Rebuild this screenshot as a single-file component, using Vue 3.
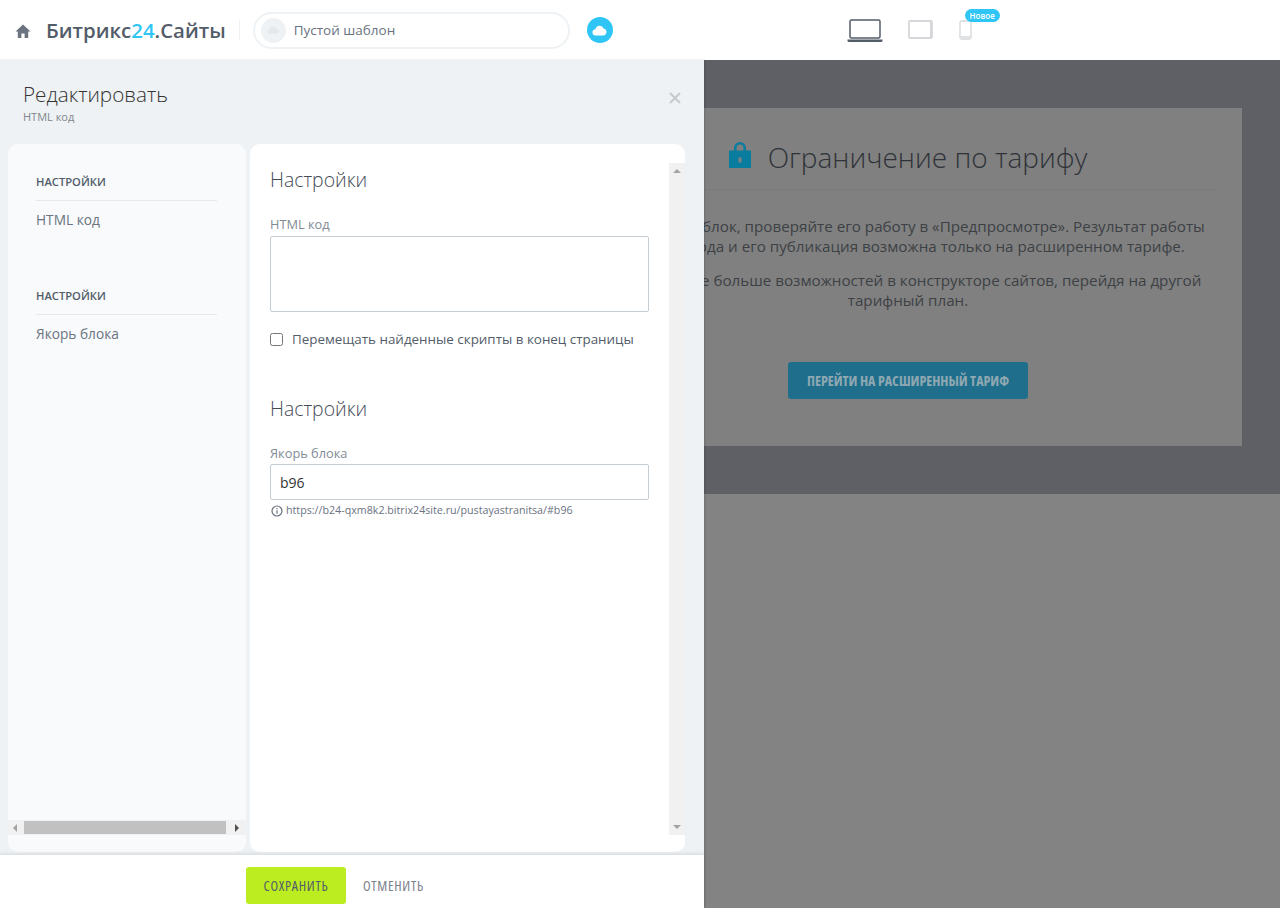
<template>
  <div class="page">
    <header class="topbar">
      <svg class="home" viewBox="0 0 16 14" width="16" height="14"><path d="M8 .5 .5 7.400h2.300V14h3.600V9.400h3.200V14h3.600V7.400h2.300z" fill="#6a737f" /></svg>
      <div class="logo">Битрикс<span class="logo-num">24</span>.Сайты</div>
      <div class="logo-sep"></div>
      <div class="tpl">
        <span class="tpl-pic">
          <svg viewBox="0 0 20 14" width="20" height="14"><path d="M5 12a3 3 0 0 1 0-6 5 5 0 0 1 9.500-1A3.500 3.500 0 0 1 15 12z" fill="#e3e8eb" /></svg>
        </span>
        <span class="tpl-name">Пустой шаблон</span>
      </div>
      <span class="cloud">
        <svg viewBox="0 0 16 12" width="15" height="11"><path d="M4 11.500a3.500 3.500 0 0 1-.4-7 4.700 4.700 0 0 1 8.900-.7A3.900 3.900 0 0 1 12 11.500z" fill="#fff" /></svg>
      </span>
      <div class="devices">
        <svg class="laptop" viewBox="0 0 36 24" width="36" height="24"><rect x="3" y="1" width="30" height="18" rx="1.500" fill="none" stroke="#535c69" stroke-width="1.500" /><path d="M.5 20.500h35v1a1.500 1.500 0 0 1-1.500 1.500H2a1.500 1.500 0 0 1-1.500-1.500z" fill="#535c69" /></svg>
        <svg class="tablet" viewBox="0 0 26 20" width="26" height="20"><rect x="1" y="1" width="23" height="17" rx="1" fill="none" stroke="#d5d7da" stroke-width="1.800" /><path d="M22 1h2v17h-2z" fill="#d5d7da" /></svg>
        <div class="phone-wrap">
          <svg viewBox="0 0 14 20" width="14" height="20"><rect x="1" y="1" width="11" height="18" rx="1.500" fill="none" stroke="#d5d7da" stroke-width="1.300" /><path d="M1 16h11v3H1z" fill="#dfe1e3" /></svg>
          <span class="badge">Новое</span>
        </div>
      </div>
    </header>

    <div class="stage">
      <section class="preview">
        <div class="notice">
          <h2 class="notice-title">
            <svg viewBox="0 0 22 28" width="22" height="28"><path d="M5 12V8a6 6 0 0 1 12 0v4h-2.600V8a3.400 3.400 0 0 0-6.800 0v4z" fill="#0a7d9f" /><path d="M0 10.500h22V28H0z" fill="#0a7d9f" /><path d="M9.500 17.500h3v5h-3z" fill="#808080" /></svg>
            Ограничение по тарифу
          </h2>
          <div class="notice-line"></div>
          <p class="notice-text">Создав этот блок, проверяйте его работу в «Предпросмотре». Результат работы<br>вашего кода и его публикация возможна только на расширенном тарифе.</p>
          <p class="notice-text">Вы получите больше возможностей в конструкторе сайтов, перейдя на другой<br>тарифный план.</p>
          <a class="notice-btn">ПЕРЕЙТИ НА РАСШИРЕННЫЙ ТАРИФ</a>
        </div>
      </section>

      <aside class="panel">
        <div class="panel-head">
          <div>
            <div class="panel-title">Редактировать</div>
            <div class="panel-sub">HTML код</div>
          </div>
          <svg class="close" viewBox="0 0 12 12" width="12" height="12"><path d="M1 1l10 10M11 1 1 11" stroke="#c6cacd" stroke-width="2" fill="none" /></svg>
        </div>

        <div class="columns">
          <nav class="nav-card">
            <div class="nav-body">
              <div v-for="g in navGroups" :key="g.item" class="nav-group">
                <div class="nav-head">НАСТРОЙКИ</div>
                <div class="nav-item">{{ g.item }}</div>
              </div>
            </div>
            <div class="hbar">
              <span class="arrow-left"></span>
              <span class="hthumb"></span>
              <span class="arrow-right"></span>
            </div>
          </nav>

          <main class="form-card">
            <div class="form-body">
              <h3 class="form-title">Настройки</h3>
              <label class="field-label">HTML код</label>
              <div class="textarea"></div>
              <label class="check-row">
                <input type="checkbox" class="check" />
                <span>Перемещать найденные скрипты в конец страницы</span>
              </label>

              <h3 class="form-title second">Настройки</h3>
              <label class="field-label">Якорь блока</label>
              <input class="text-input" type="text" value="b96" />
              <div class="hint">
                <svg viewBox="0 0 12 12" width="12" height="12"><circle cx="6" cy="6" r="5" fill="none" stroke="#6a737f" stroke-width="1.200" /><path d="M5.400 5.200h1.200v3.600H5.400zM5.400 3h1.200v1.200H5.400z" fill="#6a737f" /></svg>
                <span>https://b24-qxm8k2.bitrix24site.ru/pustayastranitsa/#b96</span>
              </div>
            </div>
            <div class="vbar">
              <span class="arrow-up"></span>
              <span class="arrow-down"></span>
            </div>
          </main>
        </div>

        <footer class="panel-foot">
          <button class="btn-save">СОХРАНИТЬ</button>
          <button class="btn-cancel">ОТМЕНИТЬ</button>
        </footer>
      </aside>
    </div>
  </div>
</template>

<script setup>
const navGroups = [
  { item: 'HTML код' },
  { item: 'Якорь блока' }
]
</script>

<style>
html, body {
  margin: 0;
  background: #808080;
}
</style>

<style scoped>
.page {
  width: 1280px;
  height: 908px;
  overflow: hidden;
  display: flex;
  flex-direction: column;
  font-family: "Open Sans", "Noto Sans", sans-serif;
}

.topbar {
  height: 60px;
  flex: none;
  background: #fff;
  display: flex;
  align-items: center;
  padding-left: 15px;
  box-sizing: border-box;
}

.home {
  margin-top: 1px;
}

.logo {
  margin-left: 15px;
  font-size: 20.400px;
  font-weight: 600;
  color: #535c69;
  white-space: nowrap;
}

.logo-num {
  color: #2fc6f6;
}

.logo-sep {
  width: 1px;
  height: 20px;
  margin-left: 13px;
  background: #eef2f4;
}

.tpl {
  width: 317px;
  height: 37px;
  box-sizing: border-box;
  margin-left: 13px;
  border: 2px solid #eef2f4;
  border-radius: 19px;
  display: flex;
  align-items: center;
  padding-left: 6px;
}

.tpl-pic {
  width: 25px;
  height: 25px;
  border-radius: 50%;
  background: #eef2f4;
  display: flex;
  align-items: center;
  justify-content: center;
}

.tpl-pic svg {
  width: 14px;
}

.tpl-name {
  margin-left: 8px;
  font-size: 13.500px;
  color: #6a737f;
}

.cloud {
  width: 26px;
  height: 26px;
  margin-left: 17px;
  border-radius: 50%;
  background: #2fc6f6;
  display: flex;
  align-items: center;
  justify-content: center;
}

.devices {
  margin-left: 234px;
  display: flex;
  align-items: center;
}

.laptop {
  margin-top: 1px;
}

.tablet {
  margin-left: 25px;
}

.phone-wrap {
  position: relative;
  margin-left: 25px;
  height: 20px;
}

.badge {
  position: absolute;
  left: 6px;
  top: -11px;
  width: 35px;
  height: 13px;
  border-radius: 7px;
  background: #2fc6f6;
  color: #fff;
  font-size: 8px;
  font-weight: 600;
  line-height: 13px;
  text-align: center;
}

.stage {
  flex: 1;
  position: relative;
  background: #838383;
}

.preview {
  height: 434px;
  box-sizing: border-box;
  padding: 48px 38px 48px 574px;
  background: #5e6065;
}

.notice {
  height: 338px;
  box-sizing: border-box;
  background: #808080;
  padding-top: 30px;
  text-align: center;
  white-space: nowrap;
}

.notice-title {
  margin: 0;
  display: flex;
  align-items: center;
  justify-content: center;
  gap: 17px;
  font-size: 28px;
  font-weight: 300;
  line-height: 38px;
  color: #2f3338;
}

.notice-title svg {
  margin-top: -7px;
}

.notice-line {
  height: 1px;
  margin: 13px 28px 26px;
  background: #7a7a7a;
}

.notice-text {
  margin: 0 0 14px;
  font-size: 15.200px;
  line-height: 20px;
  color: #3d4045;
}

.notice-btn {
  display: block;
  width: 240px;
  height: 37px;
  margin: 52px auto 0;
  border-radius: 3px;
  background: #1f6f8c;
  color: #8fa8b2;
  font-size: 14px;
  font-weight: 700;
  font-stretch: 85%;
  line-height: 37px;
}

.panel {
  position: absolute;
  left: 0;
  top: 0;
  bottom: 0;
  width: 704px;
  background: #eef2f4;
  display: flex;
  flex-direction: column;
  box-shadow: 1px 0 2px rgba(0, 0, 0, 0.15);
}

.panel-head {
  height: 84px;
  flex: none;
  box-sizing: border-box;
  padding: 18px 23px 0 23px;
  display: flex;
  justify-content: space-between;
}

.panel-title {
  font-size: 20.700px;
  font-weight: 300;
  line-height: 32px;
  color: #333;
}

.panel-sub {
  font-size: 11px;
  line-height: 14px;
  color: #80868e;
}

.close {
  margin-top: 14px;
}

.columns {
  flex: 1;
  min-height: 0;
  display: flex;
  gap: 4px;
  padding: 0 19px 2px 8px;
}

.nav-card {
  width: 238px;
  background: #f8fafc;
  border-radius: 10px;
  display: flex;
  flex-direction: column;
  padding-bottom: 17px;
}

.nav-body {
  flex: 1;
  padding: 29px 29px 0 28px;
}

.nav-group {
  height: 114px;
}

.nav-head {
  height: 27px;
  border-bottom: 1px solid #e6e9ec;
  font-size: 11.200px;
  font-weight: 600;
  line-height: 18px;
  color: #525c69;
}

.nav-item {
  margin-top: 9px;
  font-size: 13.700px;
  line-height: 20px;
  color: #6a737f;
}

.hbar {
  height: 15px;
  background: #f1f1f1;
  display: flex;
  align-items: center;
}

.hthumb {
  width: 202px;
  height: 13px;
  margin: 0 9px 0 7px;
  background: #c1c1c1;
}

.arrow-left,
.arrow-right {
  width: 0;
  height: 0;
  border-top: 4px solid transparent;
  border-bottom: 4px solid transparent;
}

.arrow-left {
  margin-left: 5px;
  border-right: 4px solid #a3a3a3;
}

.arrow-right {
  border-left: 4px solid #505050;
}

.form-card {
  flex: 1;
  min-width: 0;
  background: #fff;
  border-radius: 10px;
  display: flex;
  padding: 19px 0 17px;
}

.form-body {
  flex: 1;
  min-width: 0;
  margin-top: -1px;
  padding: 0 20px 0 20px;
}

.vbar {
  width: 16px;
  flex: none;
  background: #f1f1f1;
  display: flex;
  flex-direction: column;
  justify-content: space-between;
  align-items: center;
  padding: 6px 0;
  box-sizing: border-box;
}

.arrow-up,
.arrow-down {
  width: 0;
  height: 0;
  border-left: 4px solid transparent;
  border-right: 4px solid transparent;
}

.arrow-up {
  border-bottom: 4px solid #a3a3a3;
}

.arrow-down {
  border-top: 4px solid #a3a3a3;
}

.form-title {
  margin: 0;
  font-size: 19.400px;
  font-weight: 300;
  line-height: 36px;
  color: #444b55;
}

.form-title.second {
  margin-top: 42px;
}

.field-label {
  display: block;
  margin-top: 17px;
  font-size: 12.800px;
  line-height: 18px;
  color: #828b95;
}

.textarea {
  height: 76px;
  margin-top: 3px;
  box-sizing: border-box;
  border: 1px solid #c6cdd3;
  border-radius: 2px;
}

.check-row {
  display: flex;
  align-items: center;
  margin-top: 17px;
  font-size: 13.400px;
  line-height: 20px;
  color: #535c69;
}

.check {
  width: 13px;
  height: 13px;
  margin: 0 9px 0 0;
}

.text-input {
  display: block;
  width: 100%;
  height: 36px;
  margin-top: 2px;
  padding: 0 9px;
  box-sizing: border-box;
  border: 1px solid #c6cdd3;
  border-radius: 2px;
  outline: none;
  font: 14px "Open Sans", sans-serif;
  color: #333;
}

.hint {
  display: flex;
  align-items: center;
  gap: 3px;
  margin-top: 3px;
  padding-left: 1px;
  font-size: 10.700px;
  line-height: 15px;
  color: #6a737f;
}

.panel-foot {
  height: 54px;
  flex: none;
  background: #fff;
  box-sizing: border-box;
  border-top: 1px solid #dfe2e4;
  padding: 12px 0 0 246px;
  display: flex;
  align-items: flex-start;
  box-shadow: 0 -1px 3px rgba(0, 0, 0, 0.08);
  position: relative;
}

.btn-save,
.btn-cancel {
  border: none;
  padding: 0;
  font-family: inherit;
  font-size: 14px;
  font-weight: 400;
  font-stretch: 85%;
  letter-spacing: 0.7px;
  height: 37px;
}

.btn-save {
  width: 100px;
  border-radius: 3px;
  background: #bbed21;
  color: #535c69;
}

.btn-cancel {
  margin-left: 17px;
  background: none;
  color: #7b8089;
}
</style>
